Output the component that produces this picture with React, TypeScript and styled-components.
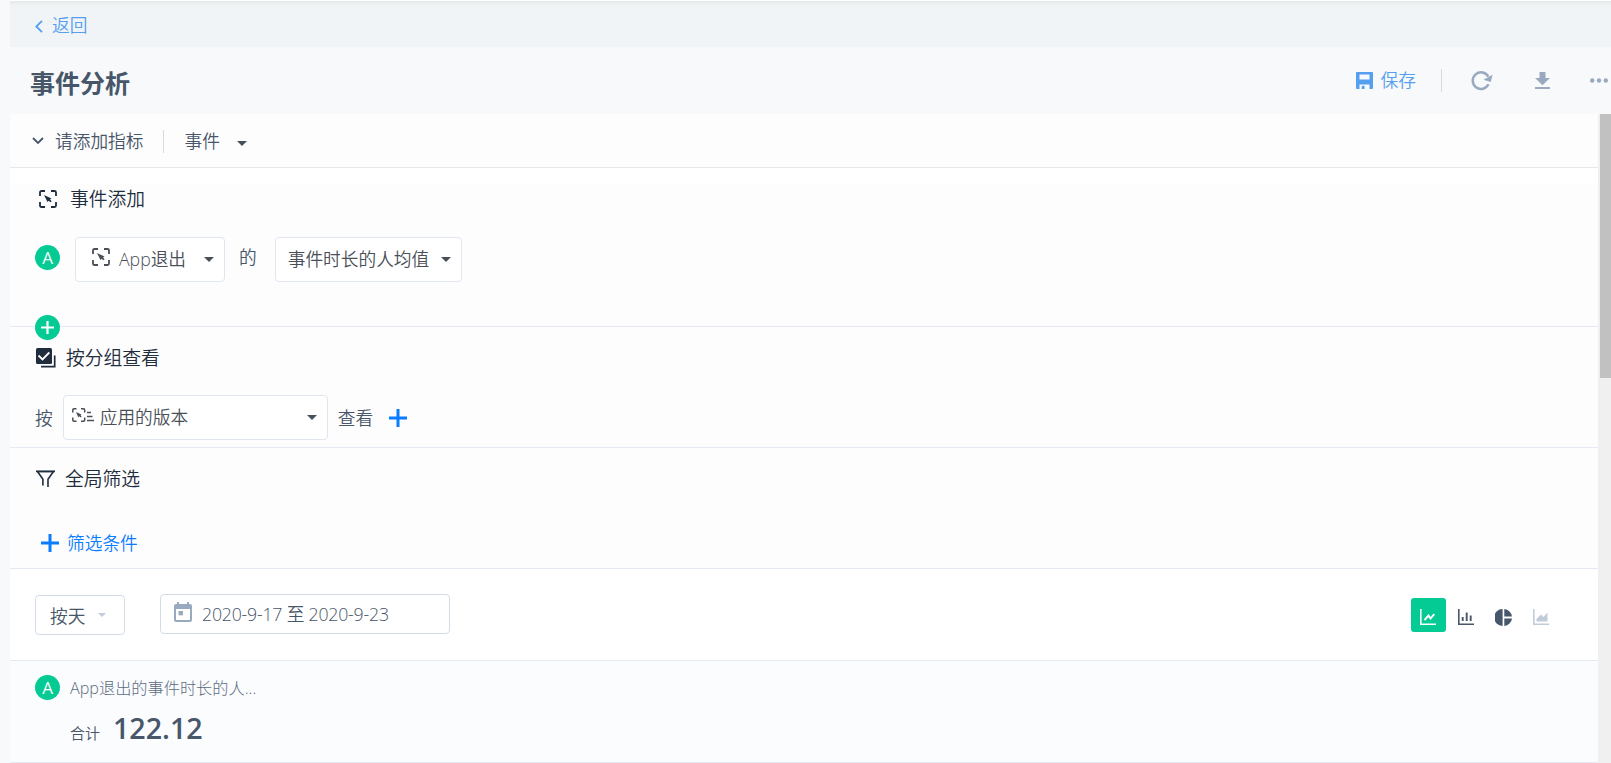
import React from "react";
import styled, { createGlobalStyle } from "styled-components";

const GlobalStyle = createGlobalStyle`
  * {
    box-sizing: border-box;
  }

  body {
    margin: 0;
    overflow: hidden;
    background-color: #f8f9fb;
    color: #475669;
    font-family: "Open Sans", "Noto Sans CJK SC", sans-serif;
    font-size: 17.7px;
    font-weight: 350;
  }

  svg {
    display: block;
    flex: none;
  }
`;

const Page = styled.div`
  height: 763px;
  padding-left: 10px;
  display: flex;
  flex-direction: column;
  white-space: nowrap;
`;

const BackBar = styled.nav`
  height: 47px;
  flex: none;
  padding: 4px 0 0 25px;
  display: flex;
  align-items: center;
  gap: 9px;
  border-top: 1px solid #fff;
  background: linear-gradient(#e2e7e7, #eff3f4 4px, #f0f4f6 8px);
`;

const BackLink = styled.a`
  padding-bottom: 3px;
  color: #559ff0;
  line-height: 24px;
`;

const Header = styled.header`
  height: 67px;
  flex: none;
  padding: 0 3px 0 20px;
  display: flex;
  align-items: center;
  justify-content: space-between;
`;

const Title = styled.h1`
  margin: 4px 0 0;
  font-size: 25px;
  line-height: 30px;
  font-weight: 700;
`;

const Actions = styled.div`
  display: flex;
  align-items: center;
  color: #99a9bf;
`;

const SaveButton = styled.span`
  display: flex;
  align-items: center;
  gap: 8px;
  color: #559ff0;
`;

const SaveText = styled.span`
  padding-bottom: 2px;
  line-height: 24px;
`;

const ActionIcon = styled.span<{ $left: number }>`
  margin-left: ${({ $left }) => $left}px;
`;

const Divider = styled.i<{ $left: number; $right?: number }>`
  width: 1px;
  height: 23px;
  margin: 0 ${({ $right = 0 }) => $right}px 0 ${({ $left }) => $left}px;
  background-color: #d6dae0;
`;

const Body = styled.div`
  flex: 1;
  display: flex;
  min-height: 0;
`;

const Content = styled.main`
  flex: 1;
  background-color: #fff;
`;

const Scrollbar = styled.div`
  width: 13px;
  padding-left: 2px;
  background-color: #f0f0f0;
`;

const Thumb = styled.div`
  height: 264px;
  background-color: #c1c1c1;
`;

const MetricBar = styled.div`
  height: 54px;
  padding: 1px 0 0 22px;
  display: flex;
  align-items: center;
  background-color: #fdfdfd;
  border-bottom: 1px solid #e6e9ec;
`;

const MetricCaret = styled.span`
  padding-top: 4px;
`;

const Section = styled.section<{ $height: number }>`
  position: relative;
  height: ${({ $height }) => $height}px;
  background-color: #fdfdfd;
  border-bottom: 1px solid #e5e9f2;
`;

const Spacer = styled.div`
  height: 16px;
  background-color: #fff;
`;

const Heading = styled.h2<{ $top: number; $left: number; $gap: number }>`
  margin: 0;
  padding: ${({ $top, $left }) => `${$top}px 0 0 ${$left}px`};
  display: flex;
  align-items: center;
  gap: ${({ $gap }) => $gap}px;
  color: #1f2d3d;
  font-size: 18.8px;
  line-height: 28px;
  font-weight: 350;
`;

const Row = styled.div<{ $top: number }>`
  padding: ${({ $top }) => $top}px 0 0 25px;
  display: flex;
  align-items: center;
`;

const Word = styled.span<{ $left?: number; $right?: number; $lift?: number }>`
  margin-left: ${({ $left = 0 }) => $left}px;
  margin-right: ${({ $right = 0 }) => $right}px;
  padding-bottom: ${({ $lift = 0 }) => $lift}px;
  line-height: 24px;
`;

const Select = styled.div<{ $width: number; $left: number; $pad: string }>`
  width: ${({ $width }) => $width}px;
  height: 45px;
  margin-left: ${({ $left }) => $left}px;
  padding: ${({ $pad }) => $pad};
  display: flex;
  align-items: center;
  justify-content: space-between;
  background-color: #fff;
  border: 1px solid #e0e6f0;
  border-radius: 4px;
  color: #4a4f57;
`;

const SelectIcon = styled.span<{ $gap: number }>`
  margin-right: ${({ $gap }) => $gap}px;
  padding-bottom: 3px;
`;

const SelectValue = styled.span`
  padding-bottom: 2px;
  display: flex;
  align-items: center;
  line-height: 24px;
`;

const Badge = styled.span<{ $lift?: number }>`
  width: 25px;
  height: 25px;
  flex: none;
  margin-bottom: ${({ $lift = 0 }) => $lift}px;
  display: flex;
  align-items: center;
  justify-content: center;
  border-radius: 50%;
  background-color: #04cb94;
  color: #fff;
  font-size: 17px;
  line-height: 25px;
  font-weight: 400;
`;

const AddBadge = styled(Badge)`
  position: absolute;
  left: 25px;
  bottom: -14px;
  z-index: 1;
`;

const AddGroup = styled.span`
  color: #0a7cff;
`;

const AddFilter = styled.a`
  display: flex;
  align-items: center;
  gap: 8px;
  padding: 38px 0 0 31px;
  color: #0a7cff;
  line-height: 24px;
`;

const ChartBar = styled.div`
  height: 92px;
  padding: 0 40px 0 25px;
  display: flex;
  justify-content: space-between;
  border-bottom: 1px solid #e5e9f2;
`;

const Filters = styled.div`
  display: flex;
  gap: 35px;
`;

const Period = styled.div`
  width: 90px;
  height: 40px;
  margin-top: 26px;
  padding: 0 18px 0 14px;
  display: flex;
  align-items: center;
  justify-content: space-between;
  border: 1px solid #d3dce6;
  border-radius: 4px;
`;

const DateRange = styled.div`
  width: 290px;
  height: 40px;
  margin-top: 25px;
  padding: 0 13px;
  display: flex;
  align-items: center;
  border: 1px solid #d3dce6;
  border-radius: 4px;
`;

const CalendarSlot = styled.span`
  margin-right: 10px;
  padding-bottom: 4px;
`;

const DateText = styled.span`
  padding-bottom: 2px;
  letter-spacing: -0.2px;
`;

const ChartTypes = styled.div`
  display: flex;
  padding-top: 29px;
  gap: 2.5px;
`;

const ChartType = styled.span<{ $active?: boolean; $disabled?: boolean }>`
  width: 35px;
  height: 34px;
  padding-top: 4px;
  display: flex;
  align-items: center;
  justify-content: center;
  border-radius: 3px;
  background-color: ${({ $active }) => ($active ? "#04cb94" : "transparent")};
  color: ${({ $active, $disabled }) =>
    $active ? "#fff" : $disabled ? "#c0ccda" : "#475669"};
`;

const Summary = styled.section`
  height: 102px;
  padding: 14px 0 0 25px;
  display: flex;
  gap: 10px;
  background-color: #fbfcfe;
  border-bottom: 1px solid #e5e9f2;
`;

const SummaryName = styled.div`
  color: #5c6b7e;
  font-size: 16.2px;
  line-height: 26px;
  font-weight: 300;
`;

const Total = styled.div`
  padding-top: 7px;
  display: flex;
  align-items: baseline;
  gap: 13px;
  font-size: 15px;
  line-height: 40px;
`;

const TotalValue = styled.strong`
  font-size: 28.6px;
  font-weight: 600;
`;

const Caret = ({ color = "#475059", width = 10 }) => (
  <svg width={width} height={width / 2} viewBox="0 0 10 5" fill={color}>
    <path d="M0 0h10L5 5z" />
  </svg>
);

const EventIcon = () => (
  <svg width="18" height="18" viewBox="0 0 18 18">
    <path
      d="M1 6V2.500Q1 1 2.500 1H6M12 1h3.500Q17 1 17 2.500V6M17 12v3.500q0 1.500-1.500 1.500H12M6 17H2.500Q1 17 1 15.500V12"
      fill="none"
      stroke="currentColor"
      strokeWidth="1.800"
    />
    <path d="M5 5 12.500 8.500 11 9.500l1.700 1.700-1.300 1-1.700-1.500L8.500 12z" fill="currentColor" />
  </svg>
);

const PropertyIcon = () => (
  <svg width="22" height="14" viewBox="0 0 22 14">
    <path
      d="M.8 4.500V2Q.8.8 2 .8h2.500M9 .8h2.500q1.200 0 1.200 1.200v2.500M12.700 9.500V12q0 1.200-1.200 1.200H9M4.500 13.200H2Q.8 13.200.8 12V9.500"
      fill="none"
      stroke="currentColor"
      strokeWidth="1.500"
    />
    <path d="M4 4 9.500 6.500 8.500 7.300l1.200 1.300-1 1-1.300-1.300-1 1.200z" fill="currentColor" />
    <path d="M15 4.500h4M15 8.500h5.500M15 12.500h7" stroke="currentColor" strokeWidth="1.700" />
  </svg>
);

const GroupIcon = () => (
  <svg width="20" height="20" viewBox="0 0 20 20">
    <rect width="16" height="16" rx="1.500" fill="currentColor" />
    <path d="m2.500 7.500 4 4 6.800-7" fill="none" stroke="#fff" strokeWidth="1.800" />
    <path d="M18.700 7.500v11.200H5" fill="none" stroke="currentColor" strokeWidth="1.700" />
  </svg>
);

const FilterIcon = () => (
  <svg width="19" height="18" viewBox="0 0 19 18">
    <path
      d="M6.900 15.500V9.200L1.500 1.500h16L12 9.200V17"
      fill="none"
      stroke="currentColor"
      strokeWidth="1.600"
    />
    <path d="M0 .6h19v1.600H0z" fill="currentColor" />
  </svg>
);

const PlusIcon = ({ size = 18, weight = 3 }) => (
  <svg width={size} height={size} viewBox={`0 0 ${size} ${size}`}>
    <path
      d={`M${size / 2} 0v${size}M0 ${size / 2}h${size}`}
      stroke="currentColor"
      strokeWidth={weight}
    />
  </svg>
);

const SaveIcon = () => (
  <svg width="17" height="17" viewBox="0 0 17 17" fill="currentColor">
    <path
      fillRule="evenodd"
      d="M1 0h15q1 0 1 1v15q0 1-1 1h-2.500v-4.500h-10V17H1q-1 0-1-1V1q0-1 1-1zM3.500 2.500v5h10v-5z"
    />
    <path d="M5.800 13.800h2.700V17H5.800z" />
  </svg>
);

const RefreshIcon = () => (
  <svg width="22" height="20" viewBox="0 0 22 20">
    <path
      d="M17.300 5.600A8.300 8.300 0 1 0 17.500 13.300"
      fill="none"
      stroke="currentColor"
      strokeWidth="2.500"
    />
    <path d="M21.500 3.800 19.800 11 12.600 8.800z" fill="currentColor" />
  </svg>
);

const DownloadIcon = () => (
  <svg width="15" height="17" viewBox="0 0 15 17" fill="currentColor">
    <path d="M4.500 0h6v6H15l-7.500 7.200L0 6h4.500zM0 15h15v2H0z" />
  </svg>
);

const MoreIcon = () => (
  <svg width="18" height="5" viewBox="0 0 18 5" fill="currentColor">
    <circle cx="2.200" cy="2.500" r="2.200" />
    <circle cx="9" cy="2.500" r="2.200" />
    <circle cx="15.800" cy="2.500" r="2.200" />
  </svg>
);

const CalendarIcon = () => (
  <svg width="18" height="20" viewBox="0 0 18 20" fill="#99a9bf">
    <path
      fillRule="evenodd"
      d="M3 0h2v2h8V0h2v2h1q2 0 2 2v14q0 2-2 2H2q-2 0-2-2V4q0-2 2-2h1zM2 7v11h14V7z"
    />
    <path d="M4.500 9H9v4.300H4.500z" />
  </svg>
);

const LineChartIcon = () => (
  <svg width="16" height="16" viewBox="0 0 16 16" fill="none" stroke="currentColor">
    <path d="M.8 0v15.200H16" strokeWidth="1.600" />
    <path d="m4.500 11 4-4.500 2 3 3.800-4.300" strokeWidth="1.900" />
  </svg>
);

const BarChartIcon = () => (
  <svg width="16" height="16" viewBox="0 0 16 16" fill="none" stroke="currentColor">
    <path d="M.8 0v15.200H16" strokeWidth="1.600" />
    <path d="M4.700 12V8M8.700 12V3.500M12.700 12V6.500" strokeWidth="1.900" />
  </svg>
);

const PieChartIcon = () => (
  <svg width="17" height="17" viewBox="0 0 17 17" fill="currentColor">
    <path d="M7.600 0v17A8.500 8.500 0 0 1 7.600 0zM9.300 0A8.500 8.500 0 0 1 17 7.600H9.300zM9.300 9.400H17A8.500 8.500 0 0 1 9.300 17z" />
  </svg>
);

const AreaChartIcon = () => (
  <svg width="16" height="16" viewBox="0 0 16 16">
    <path d="M.8 0v15.200H16" fill="none" stroke="currentColor" strokeWidth="1.600" />
    <path d="M3.500 12.500V10L8 5.500l2.500 2.500L14.500 3.500v9z" fill="currentColor" />
  </svg>
);

const App: React.FC = () => {
  return (
    <>
      <GlobalStyle />
      <Page>
        <BackBar>
          <svg width="8" height="13" viewBox="0 0 8 13">
            <path d="M7 .8 1.300 6.500 7 12.200" fill="none" stroke="#559ff0" strokeWidth="1.800" />
          </svg>
          <BackLink>返回</BackLink>
        </BackBar>

        <Header>
          <Title>事件分析</Title>
          <Actions>
            <SaveButton>
              <SaveIcon />
              <SaveText>保存</SaveText>
            </SaveButton>
            <Divider $left={25} />
            <ActionIcon $left={29}>
              <RefreshIcon />
            </ActionIcon>
            <ActionIcon $left={42}>
              <DownloadIcon />
            </ActionIcon>
            <ActionIcon $left={40}>
              <MoreIcon />
            </ActionIcon>
          </Actions>
        </Header>

        <Body>
          <Content>
            <MetricBar>
              <svg width="12" height="8" viewBox="0 0 12 8">
                <path d="m1 1 5 5 5-5" fill="none" stroke="#475669" strokeWidth="1.800" />
              </svg>
              <Word $left={11}>请添加指标</Word>
              <Divider $left={20} $right={20} />
              <Word $right={17}>事件</Word>
              <MetricCaret>
                <Caret />
              </MetricCaret>
            </MetricBar>

            <Section $height={159}>
              <Spacer />
              <Heading $top={1} $left={29} $gap={13}>
                <EventIcon />
                事件添加
              </Heading>
              <Row $top={24}>
                <Badge $lift={5}>A</Badge>
                <Select $width={150} $left={15} $pad="0 10px 0 16px">
                  <SelectValue>
                    <SelectIcon $gap={9}>
                      <EventIcon />
                    </SelectIcon>
                    App退出
                  </SelectValue>
                  <Caret />
                </Select>
                <Word $left={14} $lift={6}>
                  的
                </Word>
                <Select $width={187} $left={18} $pad="0 10px 0 12px">
                  <SelectValue>事件时长的人均值</SelectValue>
                  <Caret />
                </Select>
              </Row>
              <AddBadge>
                <PlusIcon size={13} weight={2.2} />
              </AddBadge>
            </Section>

            <Section $height={121}>
              <Heading $top={17} $left={26} $gap={10}>
                <GroupIcon />
                按分组查看
              </Heading>
              <Row $top={23}>
                <Word>按</Word>
                <Select $width={265} $left={10} $pad="0 10px 0 8px">
                  <SelectValue>
                    <SelectIcon $gap={6}>
                      <PropertyIcon />
                    </SelectIcon>
                    应用的版本
                  </SelectValue>
                  <Caret />
                </Select>
                <Word $left={10} $right={16}>
                  查看
                </Word>
                <AddGroup>
                  <PlusIcon />
                </AddGroup>
              </Row>
            </Section>

            <Section $height={121}>
              <Heading $top={17} $left={26} $gap={10}>
                <FilterIcon />
                全局筛选
              </Heading>
              <AddFilter>
                <PlusIcon />
                筛选条件
              </AddFilter>
            </Section>

            <ChartBar>
              <Filters>
                <Period>
                  按天
                  <Caret color="#c0ccda" width={8} />
                </Period>
                <DateRange>
                  <CalendarSlot>
                    <CalendarIcon />
                  </CalendarSlot>
                  <DateText>2020-9-17 至 2020-9-23</DateText>
                </DateRange>
              </Filters>
              <ChartTypes>
                <ChartType $active>
                  <LineChartIcon />
                </ChartType>
                <ChartType>
                  <BarChartIcon />
                </ChartType>
                <ChartType>
                  <PieChartIcon />
                </ChartType>
                <ChartType $disabled>
                  <AreaChartIcon />
                </ChartType>
              </ChartTypes>
            </ChartBar>

            <Summary>
              <Badge>A</Badge>
              <div>
                <SummaryName>App退出的事件时长的人...</SummaryName>
                <Total>
                  合计
                  <TotalValue>122.12</TotalValue>
                </Total>
              </div>
            </Summary>
          </Content>
          <Scrollbar>
            <Thumb />
          </Scrollbar>
        </Body>
      </Page>
    </>
  );
};

export default App;
